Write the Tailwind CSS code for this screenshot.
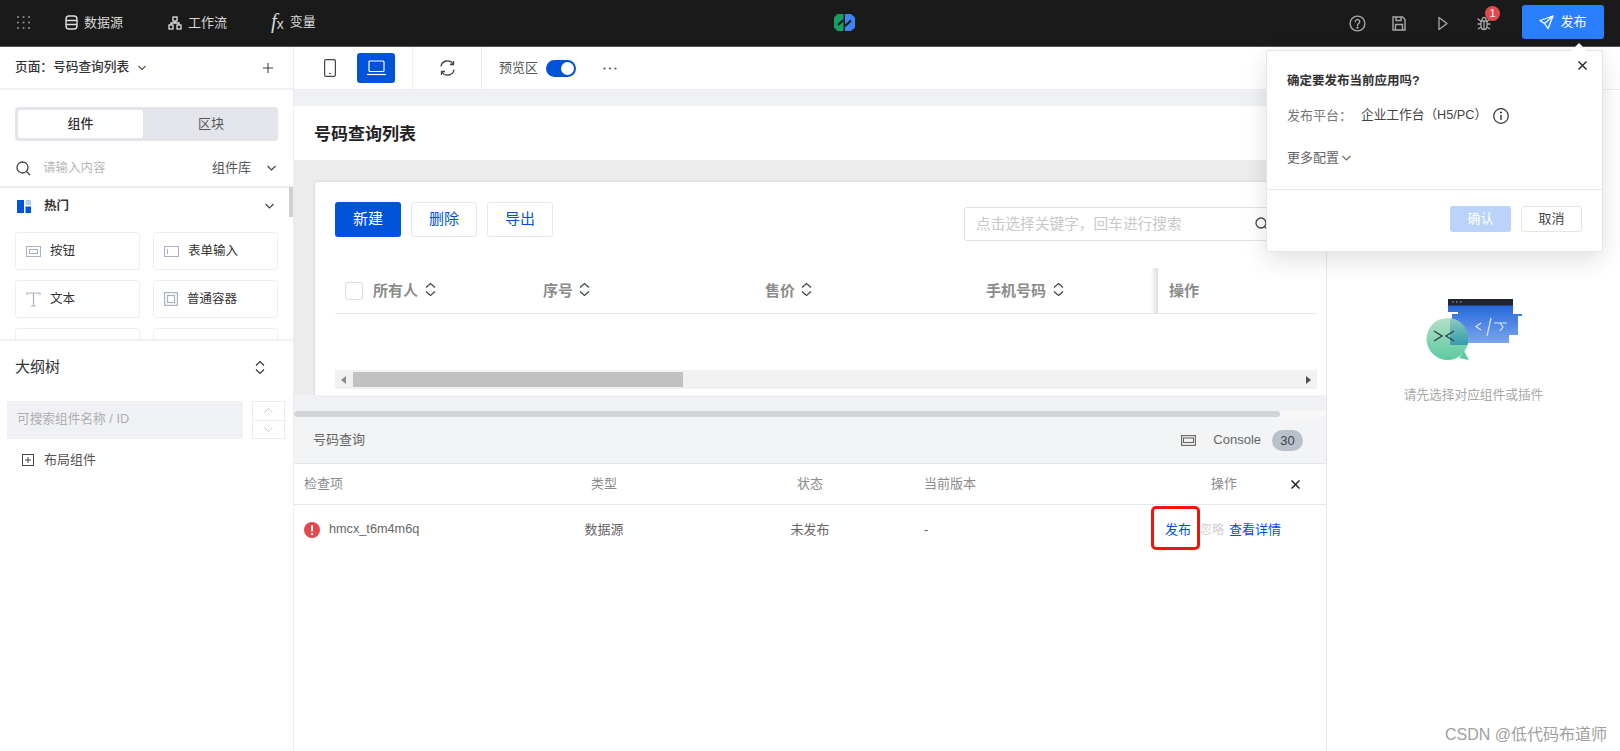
<!DOCTYPE html>
<html lang="zh">
<head>
<meta charset="utf-8">
<title>号码查询列表</title>
<script src="https://cdn.jsdelivr.net/npm/@tailwindcss/browser@4"></script>
</head>
<body class="font-['Liberation_Sans','Noto_Sans_CJK_SC',sans-serif]">
<div class="relative w-[1620px] h-[751px] overflow-hidden bg-white flex flex-col text-[13px] text-[#333]">

  <!-- top bar -->
  <header class="h-[47px] shrink-0 bg-[#1a1a1a] flex items-center text-[#d8d8d8] border-b border-[#555]">
    <div class="w-[293px] flex items-center text-[13px] pb-[1px]">
      <svg class="ml-[16px] w-[15px] h-[15px]" viewBox="0 0 15 15" fill="#8a8a8a"><circle cx="2" cy="2" r="1.1"/><circle cx="7.5" cy="2" r="1.1"/><circle cx="13" cy="2" r="1.1"/><circle cx="2" cy="7.5" r="1.1"/><circle cx="7.5" cy="7.5" r="1.1"/><circle cx="13" cy="7.5" r="1.1"/><circle cx="2" cy="13" r="1.1"/><circle cx="7.5" cy="13" r="1.1"/><circle cx="13" cy="13" r="1.1"/></svg>
      <svg class="ml-[34px] w-[13px] h-[15px]" viewBox="0 0 13 15" fill="none" stroke="#e0e0e0" stroke-width="1.4"><rect x="1" y="1" width="11" height="13" rx="3"/><path d="M1 5.5h11M1 9.5h11"/></svg>
      <span class="ml-[6px]">数据源</span>
      <svg class="ml-[45px] w-[14px] h-[14px]" viewBox="0 0 14 14" fill="none" stroke="#e0e0e0" stroke-width="1.3"><rect x="5" y="1" width="4" height="4"/><rect x="1" y="9" width="4" height="4"/><rect x="9" y="9" width="4" height="4"/><path d="M7 5v2M3 9V7h8v2"/></svg>
      <span class="ml-[6px]">工作流</span>
    </div>
  </header>
  <div class="absolute left-[271px] top-[11px] flex items-center text-[#d8d8d8]">
    <span class="font-['Liberation_Serif',serif] italic text-[21px] leading-none">f</span><span class="text-[14px] leading-none mt-[5px] mr-[6px]">x</span><span>变量</span>
  </div>
  <!-- logo -->
  <svg class="absolute left-[834px] top-[14px] w-[21px] h-[18px]" viewBox="0 0 21 18">
    <path d="M3.500 0H9.500V17H3.500L0 13.500V3.500Z" fill="#12a163"/>
    <path d="M11 0H17L21 3.500V13.500L17 17H11Z" fill="#3f84f5"/>
    <path d="M4 11L9.500 6M11 12L17 6.500" stroke="#1a1a1a" stroke-width="2.200"/>
  </svg>
  <!-- top bar actions -->
  <svg class="absolute left-[1349px] top-[15px] w-[17px] h-[17px]" viewBox="0 0 17 17" fill="none" stroke="#a8a8a8" stroke-width="1.4"><circle cx="8.5" cy="8.5" r="7.4"/><path d="M6.3 6.6a2.2 2.2 0 1 1 3.4 1.9c-.8.5-1.2 1-1.2 1.9" stroke-linecap="round"/><circle cx="8.5" cy="12.6" r=".5" fill="#a8a8a8"/></svg>
  <svg class="absolute left-[1392px] top-[16px] w-[14px] h-[15px]" viewBox="0 0 14 15" fill="none" stroke="#a8a8a8" stroke-width="1.4"><path d="M1 1h9.5L13 3.5V14H1Z"/><path d="M4 1v3.5h5V1M3.5 14V8.5h7V14"/></svg>
  <svg class="absolute left-[1438px] top-[16px] w-[10px] h-[15px]" viewBox="0 0 10 15" fill="none" stroke="#a8a8a8" stroke-width="1.3"><path d="M1 1.5L9 7.5L1 13.5Z" stroke-linejoin="round"/></svg>
  <svg class="absolute left-[1477px] top-[16px] w-[14px] h-[15px]" viewBox="0 0 14 15" fill="none" stroke="#a8a8a8" stroke-width="1.3"><path d="M4 5h6v5.5a3 3 0 0 1-6 0Z"/><path d="M5 5V3.5a2 2 0 0 1 4 0V5M0.5 2.5L4 5.5M13.5 2.5L10 5.5M0.5 8h3.5M13.5 8H10M1 13l3-2M13 13l-3-2M7 5v8"/></svg>
  <span class="absolute left-[1485px] top-[6px] w-[15px] h-[15px] rounded-full bg-[#e5484d] text-white text-[11px] leading-[15px] text-center">1</span>
  <button class="absolute left-[1522px] top-[5px] w-[82px] h-[34px] rounded-[3px] bg-[#2a7fff] text-white flex items-center justify-center gap-[6px]">
    <svg class="w-[15px] h-[15px]" viewBox="0 0 15 15" fill="none" stroke="white" stroke-width="1.3" stroke-linejoin="round"><path d="M14 1L1 5.5L5.5 8.5L9 13.5Z"/><path d="M14 1L5.5 8.5"/></svg>
    <span>发布</span>
  </button>

  <div class="flex-1 min-h-0 flex">
    <!-- left sidebar -->
    <aside class="w-[293px] shrink-0 flex flex-col">
      <div class="h-[43px] shrink-0 flex items-center pl-[15px] pr-[20px] border-b-2 border-[#f0f1f4]">
        <span class="font-medium text-[12.7px] text-[#333]">页面：号码查询列表</span>
        <svg class="ml-[9px] w-[8px] h-[6px]" viewBox="0 0 8 6" fill="none" stroke="#555" stroke-width="1.2"><path d="M.5 1L4 4.5L7.5 1"/></svg>
        <svg class="ml-auto w-[10px] h-[10px]" viewBox="0 0 10 10" stroke="#444" stroke-width="1.1"><path d="M5 0v10M0 5h10"/></svg>
      </div>

      <div class="h-[251px] shrink-0 overflow-hidden relative border-b-2 border-[#f0f1f4]">
        <div class="mx-[15px] mt-[17px] h-[34px] rounded-[4px] bg-[#e3e5ea] p-[3px] flex">
          <div class="w-[125px] rounded-[2px] bg-white flex items-center justify-center font-medium text-[#333]">组件</div>
          <div class="flex-1 flex items-center justify-center pl-[4px] text-[#555]">区块</div>
        </div>
        <div class="h-[47px] flex items-center pl-[16px] pr-[17px] pt-[9px] border-b-2 border-[#eceef2]">
          <svg class="w-[15px] h-[15px]" viewBox="0 0 15 15" fill="none" stroke="#444" stroke-width="1.3"><circle cx="6.5" cy="6.5" r="5.5"/><path d="M10.5 10.5L14 14"/></svg>
          <span class="ml-[12px] text-[#b8b8b8] text-[12.5px]">请输入内容</span>
          <span class="ml-auto text-[#555]">组件库</span>
          <svg class="ml-[16px] w-[9px] h-[6px]" viewBox="0 0 9 6" fill="none" stroke="#444" stroke-width="1.2"><path d="M.5 1L4.5 5L8.5 1"/></svg>
        </div>
        <div class="h-[35px] flex items-center pl-[17px] pr-[19px] pt-[1px]">
          <svg class="w-[14px] h-[13px]" viewBox="0 0 14 13"><rect width="7" height="13" fill="#0052d9"/><rect x="8.5" width="5.5" height="5" fill="#b5cdf5"/><rect x="8.5" y="6.5" width="5.5" height="6.5" fill="#0052d9"/></svg>
          <span class="ml-[13px] font-bold text-[12.5px] text-[#333]">热门</span>
          <svg class="ml-auto w-[9px] h-[6px]" viewBox="0 0 9 6" fill="none" stroke="#444" stroke-width="1.2"><path d="M.5 1L4.5 5L8.5 1"/></svg>
        </div>
        <div class="absolute right-0 top-[97px] w-[4px] h-[30px] bg-[#d0d0d0]"></div>
        <div class="mx-[15px] mt-[9px] grid grid-cols-[125px_125px] gap-x-[13px] gap-y-[10px]">
          <div class="h-[38px] rounded-[3px] border border-[#eceef2] flex items-center pl-[10px] gap-[9px] text-[12.5px]">
            <svg class="w-[15px] h-[11px]" viewBox="0 0 15 11" fill="none" stroke="#a9b1c2"><rect x=".5" y=".5" width="14" height="10"/><rect x="3.5" y="3.5" width="8" height="4"/></svg>按钮
          </div>
          <div class="h-[38px] rounded-[3px] border border-[#eceef2] flex items-center pl-[10px] gap-[9px] text-[12.5px]">
            <svg class="w-[15px] h-[11px]" viewBox="0 0 15 11" fill="none" stroke="#a9b1c2"><rect x=".5" y=".5" width="14" height="10"/><path d="M3.5 3v5"/></svg>表单输入
          </div>
          <div class="h-[38px] rounded-[3px] border border-[#eceef2] flex items-center pl-[10px] gap-[9px] text-[12.5px]">
            <svg class="w-[15px] h-[15px]" viewBox="0 0 15 15" fill="none" stroke="#a9b1c2" stroke-width="1.2"><path d="M1 3V1h13v2M7.5 1v13M5 14h5"/></svg>文本
          </div>
          <div class="h-[38px] rounded-[3px] border border-[#eceef2] flex items-center pl-[10px] gap-[9px] text-[12.5px]">
            <svg class="w-[14px] h-[14px]" viewBox="0 0 14 14" fill="none" stroke="#a9b1c2" stroke-width="1.2"><rect x=".6" y=".6" width="12.8" height="12.8"/><rect x="3.5" y="3.5" width="7" height="7"/></svg>普通容器
          </div>
          <div class="h-[38px] rounded-[3px] border border-[#eceef2] pl-[10px] pt-[10px]"><div class="w-[13px] h-[12px] bg-[#e3e5ea]"></div></div>
          <div class="h-[38px] rounded-[3px] border border-[#eceef2]"></div>
        </div>
      </div>

      <div class="h-[52px] shrink-0 flex items-center pl-[15px] pr-[28px]">
        <span class="text-[15px] text-[#333]">大纲树</span>
        <svg class="ml-auto w-[10px] h-[15px]" viewBox="0 0 10 15" fill="none" stroke="#333" stroke-width="1.2"><path d="M1 5.5L5 1.5L9 5.5M1 9.5L5 13.5L9 9.5"/></svg>
      </div>
      <div class="mt-[8px] pl-[7px] flex gap-[9px]">
        <div class="w-[236px] h-[38px] rounded-[2px] bg-[#f0f1f4] flex items-center pl-[10px] text-[12.7px] text-[#aeaeae]">可搜索组件名称 / ID</div>
        <div class="w-[33px] h-[38px] border border-[#ececec] flex flex-col">
          <div class="flex-1 flex items-center justify-center border-b border-[#ececec]"><svg class="w-[9px] h-[5px]" viewBox="0 0 9 5" fill="none" stroke="#ccc"><path d="M.5 4.5L4.5 .5L8.5 4.5"/></svg></div>
          <div class="flex-1 flex items-center justify-center"><svg class="w-[9px] h-[5px]" viewBox="0 0 9 5" fill="none" stroke="#ccc"><path d="M.5 .5L4.5 4.5L8.5 .5"/></svg></div>
        </div>
      </div>
      <div class="mt-[11px] pl-[22px] flex items-center h-[20px] text-[#555]">
        <svg class="w-[12px] h-[12px]" viewBox="0 0 12 12" fill="none" stroke="#444"><rect x=".5" y=".5" width="11" height="11"/><path d="M6 3v6M3 6h6"/></svg>
        <span class="ml-[10px]">布局组件</span>
      </div>
    </aside>

    <div class="flex-1 min-w-0 flex flex-col border-l border-[#eceef2]">
      <!-- toolbar -->
      <div class="h-[43px] shrink-0 flex items-center border-b border-[#eceef2]">
        <div class="w-[119px] h-full flex items-center border-r border-[#eceef2]">
          <svg class="ml-[30px] w-[12px] h-[18px]" viewBox="0 0 12 18" fill="none" stroke="#444" stroke-width="1.2"><rect x=".6" y=".6" width="10.8" height="16.8" rx="1.5"/><path d="M5 14.5h2"/></svg>
          <div class="ml-[21px] w-[38px] h-[30px] rounded-[3px] bg-[#0052d9] flex items-center justify-center">
            <svg class="w-[19px] h-[16px]" viewBox="0 0 19 16" fill="none" stroke="white" stroke-width="1.2"><rect x="2" y="1" width="15" height="10.5" rx="1"/><path d="M0 14.5h19"/></svg>
          </div>
        </div>
        <div class="w-[69px] h-full flex items-center justify-center border-r border-[#eceef2]">
          <svg class="w-[17px] h-[16px]" viewBox="0 0 17 16" fill="none" stroke="#444" stroke-width="1.3"><path d="M2 6.5a6.5 6.5 0 0 1 12-2.5M15 9.5a6.5 6.5 0 0 1-12 2.5"/><path d="M14.5 1v3.5H11M2.5 15v-3.5H6"/></svg>
        </div>
        <span class="ml-[17px] text-[#555]">预览区</span>
        <div class="ml-[8px] w-[30px] h-[17px] rounded-full bg-[#0052d9] relative"><span class="absolute right-[2px] top-[2px] w-[13px] h-[13px] rounded-full bg-white"></span></div>
        <svg class="ml-[27px] w-[14px] h-[3px]" viewBox="0 0 14 3" fill="#555"><circle cx="1.5" cy="1.5" r="1.1"/><circle cx="7" cy="1.5" r="1.1"/><circle cx="12.5" cy="1.5" r="1.1"/></svg>
      </div>

      <div class="flex-1 min-h-0 flex">
        <!-- canvas and check panel -->
        <main class="w-[1032px] shrink-0 flex flex-col">
          <div class="h-[16px] bg-[#f0f1f4] shrink-0"></div>
          <div class="h-[54px] shrink-0 flex items-center pl-[20px] pt-[3px] text-[17px] font-bold text-[#222]">号码查询列表</div>
          <div class="h-[235px] shrink-0 bg-[#ececec] pt-[22px] pl-[21px] overflow-hidden">
            <div class="h-[240px] bg-white rounded-tl-[3px] shadow-[0_0_3px_rgba(0,0,0,.15)] pl-[20px] pr-[9px]">
              <div class="pt-[20px] flex items-start">
                <button class="w-[66px] h-[35px] rounded-[3px] bg-[#0052d9] text-white text-[15px]">新建</button>
                <button class="ml-[10px] w-[66px] h-[35px] rounded-[3px] border border-[#e7e7e7] text-[#0052d9] text-[15px]">删除</button>
                <button class="ml-[10px] w-[66px] h-[35px] rounded-[3px] border border-[#e7e7e7] text-[#0052d9] text-[15px]">导出</button>
                <div class="ml-[411px] mt-[5px] w-[314px] h-[34px] rounded-[3px] border border-[#e0e0e0] flex items-center pl-[11px] pr-[8px] text-[14.7px] text-[#c8c8c8]">
                  点击选择关键字，回车进行搜索
                  <svg class="ml-auto w-[14px] h-[14px]" viewBox="0 0 14 14" fill="none" stroke="#444" stroke-width="1.3"><circle cx="6" cy="6" r="5"/><path d="M9.8 9.8L13 13"/></svg>
                </div>
              </div>
              <div class="mt-[27px] h-[46px] grid grid-cols-[198px_222px_222px_181px_159px] border-b border-[#e7e7e7] font-bold text-[15px] text-[#8c8c8c]">
                <div class="flex items-center pl-[10px]">
                  <span class="w-[18px] h-[18px] rounded-[3px] border border-[#ddd]"></span>
                  <span class="ml-[10px] pt-[2px]">所有人</span>
                  <svg class="ml-[7px] w-[11px] h-[15px] mb-[2px]" viewBox="0 0 11 15" fill="none" stroke="#444" stroke-width="1.2"><path d="M1 5.5L5.5 1.5L10 5.5M1 9.5L5.5 13.5L10 9.5"/></svg>
                </div>
                <div class="flex items-center pl-[10px]">
                  <span class="pt-[2px]">序号</span>
                  <svg class="ml-[6px] w-[11px] h-[15px] mb-[2px]" viewBox="0 0 11 15" fill="none" stroke="#444" stroke-width="1.2"><path d="M1 5.5L5.5 1.5L10 5.5M1 9.5L5.5 13.5L10 9.5"/></svg>
                </div>
                <div class="flex items-center pl-[10px]">
                  <span class="pt-[2px]">售价</span>
                  <svg class="ml-[6px] w-[11px] h-[15px] mb-[2px]" viewBox="0 0 11 15" fill="none" stroke="#444" stroke-width="1.2"><path d="M1 5.5L5.5 1.5L10 5.5M1 9.5L5.5 13.5L10 9.5"/></svg>
                </div>
                <div class="flex items-center pl-[9px] bg-gradient-to-l from-[#dcdcdc] from-0% to-white to-[4%]">
                  <span class="pt-[2px]">手机号码</span>
                  <svg class="ml-[7px] w-[11px] h-[15px] mb-[2px]" viewBox="0 0 11 15" fill="none" stroke="#444" stroke-width="1.2"><path d="M1 5.5L5.5 1.5L10 5.5M1 9.5L5.5 13.5L10 9.5"/></svg>
                </div>
                <div class="flex items-center pl-[11px] pt-[2px]">操作</div>
              </div>
              <div class="mt-[56px] h-[19px] w-[982px] bg-[#f1f1f1] relative">
                <span class="absolute left-[6px] top-[6px] w-0 h-0 border-y-[4px] border-y-transparent border-r-[5px] border-r-[#8a8a8a]"></span>
                <span class="absolute left-[18px] top-[2px] w-[330px] h-[15px] bg-[#c1c1c1]"></span>
                <span class="absolute right-[6px] top-[6px] w-0 h-0 border-y-[4px] border-y-transparent border-l-[5px] border-l-[#505050]"></span>
              </div>
            </div>
          </div>
          <div class="h-[16px] bg-[#f0f1f4] shrink-0"></div>
          <div class="h-[6px] bg-[#f8f8f8] shrink-0"><div class="w-[986px] h-full rounded-full bg-[#d3d4d6]"></div></div>

          <div class="h-[47px] shrink-0 bg-[#f3f4f6] border-b border-[#e5e6eb] flex items-center pl-[19px] text-[#666]">
            号码查询
            <svg class="ml-auto w-[15px] h-[11px]" viewBox="0 0 15 11" fill="none" stroke="#666" stroke-width="1.1"><rect x=".6" y=".6" width="13.8" height="9.8"/><rect x="2.5" y="3" width="10" height="4.5"/></svg>
            <span class="ml-[17px] text-[#666]">Console</span>
            <span class="ml-[11px] mr-[23px] w-[31px] h-[21px] rounded-full bg-[#b8c0cc] text-[#444] text-center leading-[21px]">30</span>
          </div>
          <div class="h-[41px] shrink-0 grid grid-cols-[210px_200px_212px_195px_215px] items-center border-b border-[#e5e6eb] text-[#8c8c8c]">
            <span class="pl-[10px]">检查项</span>
            <span class="text-center">类型</span>
            <span class="text-center">状态</span>
            <span class="pl-[8px]">当前版本</span>
            <div class="flex items-center pl-[100px]">
              操作
              <svg class="ml-[54px] w-[9px] h-[9px]" viewBox="0 0 9 9" stroke="#222" stroke-width="1.5"><path d="M.5 .5L8.5 8.5M8.5 .5L.5 8.5"/></svg>
            </div>
          </div>
          <div class="h-[50px] shrink-0 grid grid-cols-[210px_200px_212px_195px_215px] items-center text-[#666]">
            <div class="flex items-center pl-[10px]">
              <svg class="w-[16px] h-[16px]" viewBox="0 0 16 16"><circle cx="8" cy="8" r="8" fill="#e5484d"/><rect x="7" y="3" width="2" height="6.5" rx="1" fill="white"/><circle cx="8" cy="12" r="1.2" fill="white"/></svg>
              <span class="ml-[9px] text-[12.7px]">hmcx_t6m4m6q</span>
            </div>
            <span class="text-center">数据源</span>
            <span class="text-center">未发布</span>
            <span class="pl-[8px]">-</span>
            <div class="flex items-center pl-[54px]">
              <span class="relative text-[#0052d9]">发布<span class="absolute left-[-14px] right-[-9px] top-[-14px] bottom-[-10px] rounded-[5px] border-[3px] border-[#f5140c]"></span></span>
              <span class="ml-[9px] text-[12px] text-[#cfcfcf]">忽略</span>
              <span class="ml-[5px] text-[13px] text-[#0052d9]">查看详情</span>
            </div>
          </div>
        </main>

        <!-- right panel -->
        <section class="flex-1 border-l border-[#e5e6eb] flex flex-col items-center pt-[209px]">
          <svg class="w-[96px] h-[63px]" viewBox="0 0 96 63">
            <defs>
              <linearGradient id="winFill" x1="0" y1="0" x2="0" y2="1"><stop offset="0" stop-color="#2468db"/><stop offset="1" stop-color="#7ba5ee"/></linearGradient>
              <linearGradient id="bubFill" x1="0" y1="0" x2="0" y2="1"><stop offset="0" stop-color="#b5dfc8"/><stop offset="1" stop-color="#5ccaa0"/></linearGradient>
              <linearGradient id="lapFill" x1="0" y1="0" x2="0" y2="1"><stop offset="0" stop-color="#2a8fb0" stop-opacity=".15"/><stop offset="1" stop-color="#2a8fb0" stop-opacity=".8"/></linearGradient>
              <clipPath id="bubClip"><circle cx="21.500" cy="40" r="21"/></clipPath>
            </defs>
            <path d="M22 6H87V15H96V17H92V36H83V44H37V30H26V15H32V13H22Z" fill="url(#winFill)"/>
            <rect x="22" y="0" width="65" height="6.500" fill="#1f2430"/>
            <path d="M26 3h1.500M30 3h1.500M34 3h1.500" stroke="#b5b8c0" stroke-width="1.200"/>
            <path d="M55 24l-5 3.500l5 3.500M65 19l-4 18M68 24h13M74 24l3 4l-3 4" stroke="#dde8fb" stroke-width="1.200" fill="none"/>
            <circle cx="21.500" cy="40" r="21" fill="url(#bubFill)"/>
            <path d="M38 52L43 61L33 59Z" fill="#5ccaa0"/>
            <path d="M24 15H44V46H24Z" fill="url(#lapFill)" clip-path="url(#bubClip)"/>
            <path d="M8 32l8 5l-8 5M28 32l-8 5l8 5" stroke="#333d4d" stroke-width="1.400" fill="none"/>
          </svg>
          <span class="mt-[24px] text-[12.7px] text-[#a8a8a8]">请先选择对应组件或插件</span>
        </section>
      </div>
    </div>
  </div>

  <!-- publish popover -->
  <div class="absolute left-[1266px] top-[50px] w-[337px] h-[202px] bg-white rounded-[2px] border border-[#e3e5ea] shadow-[0_8px_24px_rgba(0,0,0,.12)]">
    <span class="absolute right-[18px] top-[-6px] w-[10px] h-[10px] rotate-45 bg-white"></span>
    <svg class="absolute right-[15px] top-[10px] w-[9px] h-[9px]" viewBox="0 0 9 9" stroke="#222" stroke-width="1.4"><path d="M.5 .5L8.500 8.500M8.500 .5L.5 8.500"/></svg>
    <div class="pl-[20px] pt-[21px] font-bold text-[12.5px] text-[#333] leading-[18px]">确定要发布当前应用吗?</div>
    <div class="pl-[20px] mt-[16px] flex items-center h-[20px]">
      <span class="w-[74px] text-[#777]">发布平台：</span>
      <span class="text-[12.7px] text-[#444]">企业工作台（H5/PC）</span>
      <svg class="ml-[6px] w-[16px] h-[16px]" viewBox="0 0 16 16" fill="none" stroke="#333" stroke-width="1.2"><circle cx="8" cy="8" r="7.3"/><path d="M8 7v5" stroke-width="1.4"/><circle cx="8" cy="4.500" r=".5" fill="#333"/></svg>
    </div>
    <div class="pl-[20px] mt-[22px] flex items-center h-[20px] text-[#666]">
      更多配置
      <svg class="ml-[3px] w-[9px] h-[6px]" viewBox="0 0 9 6" fill="none" stroke="#666" stroke-width="1.1"><path d="M.5 1L4.500 5L8.500 1"/></svg>
    </div>
    <div class="mt-[21px] border-t border-[#e7e8ec] pt-[16px] pr-[20px] flex justify-end gap-[10px]">
      <button class="w-[61px] h-[26px] rounded-[3px] bg-[#bbd3fb] text-white">确认</button>
      <button class="w-[61px] h-[26px] rounded-[3px] border border-[#e3e5ea] text-[#444]">取消</button>
    </div>
  </div>

  <span class="absolute left-[1445px] top-[725px] text-[16px] leading-[20px] text-[#a0a0a0]">CSDN @低代码布道师</span>
</div>
</body>
</html>
